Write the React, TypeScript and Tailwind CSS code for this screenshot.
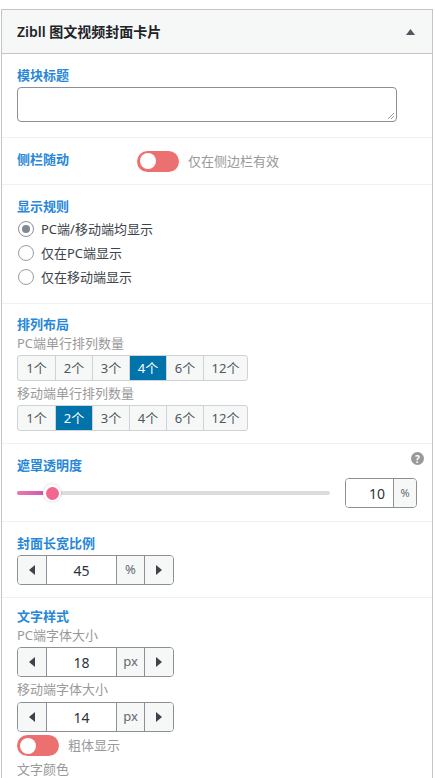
import React from "react";

const font = { fontFamily: '"Noto Sans", "Noto Sans CJK SC", sans-serif' };

function Label({ children }: { children: React.ReactNode }) {
  return (
    <div className="h-[20px] flex items-center text-[13px] font-semibold text-[#2887d8] leading-none">
      {children}
    </div>
  );
}

function Sub({ children, h = "h-[18px]" }: { children: React.ReactNode; h?: string }) {
  return <div className={`${h} flex items-center text-[13px] text-[#999] leading-none`}>{children}</div>;
}

function Toggle() {
  return (
    <div className="relative w-[42px] h-[21px] rounded-full bg-[#ed7070] shrink-0">
      <div className="absolute left-[3px] top-[2.5px] w-[16px] h-[16px] rounded-full bg-white" />
    </div>
  );
}

function Radio({ checked, label }: { checked?: boolean; label: string }) {
  return (
    <div className="h-[24px] flex items-center">
      <div
        className={`w-[16px] h-[16px] rounded-full border flex items-center justify-center ml-[1px] ${
          checked ? "border-[#8c8f94]" : "border-[#9a9da2]"
        }`}
      >
        {checked && <div className="w-[8px] h-[8px] rounded-full bg-[#7e8993]" />}
      </div>
      <span className="ml-[7px] text-[13px] text-[#3c434a] leading-none">{label}</span>
    </div>
  );
}

function ButtonGroup({ active }: { active: number }) {
  const items = ["1个", "2个", "3个", "4个", "6个", "12个"];
  return (
    <div className="flex h-[26px] w-fit rounded-[3px] border border-[#d0d2d5] bg-[#f6f7f7] overflow-hidden">
      {items.map((t, i) => (
        <div
          key={t}
          className={`flex items-center justify-center text-[13px] leading-none ${
            i === items.length - 1 ? "w-[44px]" : "w-[37px]"
          } ${i > 0 ? "border-l border-[#d0d2d5]" : ""} ${
            i === active ? "bg-[#0073aa] text-white border-[#0073aa]" : "text-[#50575e]"
          }`}
        >
          {t}
        </div>
      ))}
    </div>
  );
}

function Tri({ dir }: { dir: "left" | "right" }) {
  return (
    <svg width="6" height="10" viewBox="0 0 6 10">
      {dir === "left" ? <path d="M6 0 L0 5 L6 10 Z" fill="#3c434a" /> : <path d="M0 0 L6 5 L0 10 Z" fill="#3c434a" />}
    </svg>
  );
}

function Spinner({ value, unit }: { value: string; unit: string }) {
  return (
    <div className="flex h-[30px] w-[157px] rounded-[4px] border border-[#8c8f94] overflow-hidden">
      <div className="w-[29px] flex items-center justify-center bg-[#f6f7f7] border-r border-[#8c8f94]">
        <Tri dir="left" />
      </div>
      <div className="w-[69px] flex items-center justify-center text-[14px] text-[#2c3338] bg-white">{value}</div>
      <div className="w-[29px] flex items-center justify-center bg-[#f6f7f7] border-l border-r border-[#8c8f94] text-[13px] text-[#646970]">
        {unit}
      </div>
      <div className="flex-1 flex items-center justify-center bg-[#f6f7f7]">
        <Tri dir="right" />
      </div>
    </div>
  );
}

export default function App() {
  return (
    <div className="w-[435px] h-[778px] overflow-hidden bg-white pt-[9px]" style={font}>
      <div className="ml-[1px] w-[432px] border border-[#c3c4c7] border-b-0 min-h-[800px]">
        {/* header */}
        <div className="h-[44px] bg-[#f6f7f7] border-b border-[#c3c4c7] flex items-center justify-between pl-[15px] pr-[17px]">
          <span className="text-[14px] font-semibold text-[#1d2327] leading-none">Zibll 图文视频封面卡片</span>
          <svg width="9" height="6" viewBox="0 0 9 6">
            <path d="M0 6 L4.5 0 L9 6 Z" fill="#50575e" />
          </svg>
        </div>

        {/* 模块标题 */}
        <div className="px-[15px] pt-[10px] pb-[15px] border-b border-[#f0f0f1]">
          <div className="h-[22px] flex items-center text-[13px] font-semibold text-[#2887d8] leading-none">模块标题</div>
          <div className="relative mt-[1px] w-[380px] h-[35px] rounded-[4px] border border-[#8c8f94] bg-white">
            <svg className="absolute right-[1px] bottom-[1px]" width="8" height="8" viewBox="0 0 8 8">
              <path d="M7 1 L1 7 M7 4 L4 7" stroke="#999" strokeWidth="1" />
            </svg>
          </div>
        </div>

        {/* 侧栏随动 */}
        <div className="px-[15px] pt-[12px] pb-[12px] border-b border-[#f0f0f1]">
          <div className="h-[22px] flex items-center">
            <div className="w-[120px] text-[13px] font-semibold text-[#2887d8] leading-none -mt-[4px]">侧栏随动</div>
            <Toggle />
            <span className="ml-[9px] text-[13px] text-[#999] leading-none">仅在侧边栏有效</span>
          </div>
        </div>

        {/* 显示规则 */}
        <div className="px-[15px] pt-[10px] pb-[14px] border-b border-[#f0f0f1]">
          <div className="h-[22px] flex items-center text-[13px] font-semibold text-[#2887d8] leading-none">显示规则</div>
          <Radio checked label="PC端/移动端均显示" />
          <Radio label="仅在PC端显示" />
          <Radio label="仅在移动端显示" />
        </div>

        {/* 排列布局 */}
        <div className="px-[15px] pt-[10px] pb-[12px] border-b border-[#f0f0f1]">
          <Label>排列布局</Label>
          <Sub>PC端单行排列数量</Sub>
          <div className="mt-[3px]">
            <ButtonGroup active={3} />
          </div>
          <Sub h="h-[24px]">移动端单行排列数量</Sub>
          <div>
            <ButtonGroup active={1} />
          </div>
        </div>

        {/* 遮罩透明度 */}
        <div className="relative px-[15px] pt-[11px] pb-[13px] border-b border-[#f0f0f1]">
          <div className="absolute right-[8px] top-[8px] w-[13px] h-[13px] rounded-full bg-[#999] flex items-center justify-center text-white text-[10px] font-bold leading-none">
            ?
          </div>
          <Label>遮罩透明度</Label>
          <div className="flex items-center mt-[3px] h-[30px]">
            <div className="relative w-[313px] h-[4px] rounded-full bg-[#dcdcde]">
              <div className="absolute left-0 top-0 h-[4px] w-[34px] rounded-full bg-gradient-to-r from-[#ee78a8] to-[#c44fb6]" />
              <div className="absolute left-[26px] top-[-7px] w-[18px] h-[18px] rounded-full bg-white shadow-[0_0_2px_rgba(0,0,0,0.25)] flex items-center justify-center">
                <div className="w-[13px] h-[13px] rounded-full bg-[#f0678f]" />
              </div>
            </div>
            <div className="ml-[15px] flex h-[30px] w-[72px] rounded-[4px] border border-[#8c8f94] overflow-hidden">
              <div className="flex-1 flex items-center justify-end pr-[8px] text-[14px] text-[#2c3338] bg-white">10</div>
              <div className="w-[23px] flex items-center justify-center bg-[#f6f7f7] border-l border-[#8c8f94] text-[11px] text-[#646970]">
                %
              </div>
            </div>
          </div>
        </div>

        {/* 封面长宽比例 */}
        <div className="px-[15px] pt-[11px] pb-[12px] border-b border-[#f0f0f1]">
          <Label>封面长宽比例</Label>
          <div className="mt-[2px]">
            <Spinner value="45" unit="%" />
          </div>
        </div>

        {/* 文字样式 */}
        <div className="px-[15px] pt-[8px]">
          <Label>文字样式</Label>
          <Sub>PC端字体大小</Sub>
          <div className="mt-[3px]">
            <Spinner value="18" unit="px" />
          </div>
          <Sub h="h-[25px]">移动端字体大小</Sub>
          <Spinner value="14" unit="px" />
          <div className="mt-[3px] h-[21px] flex items-center">
            <Toggle />
            <span className="ml-[9px] text-[13px] text-[#999] leading-none">粗体显示</span>
          </div>
          <div className="mt-[3px]">
            <Sub h="h-[20px]">文字颜色</Sub>
          </div>
        </div>
      </div>
    </div>
  );
}
